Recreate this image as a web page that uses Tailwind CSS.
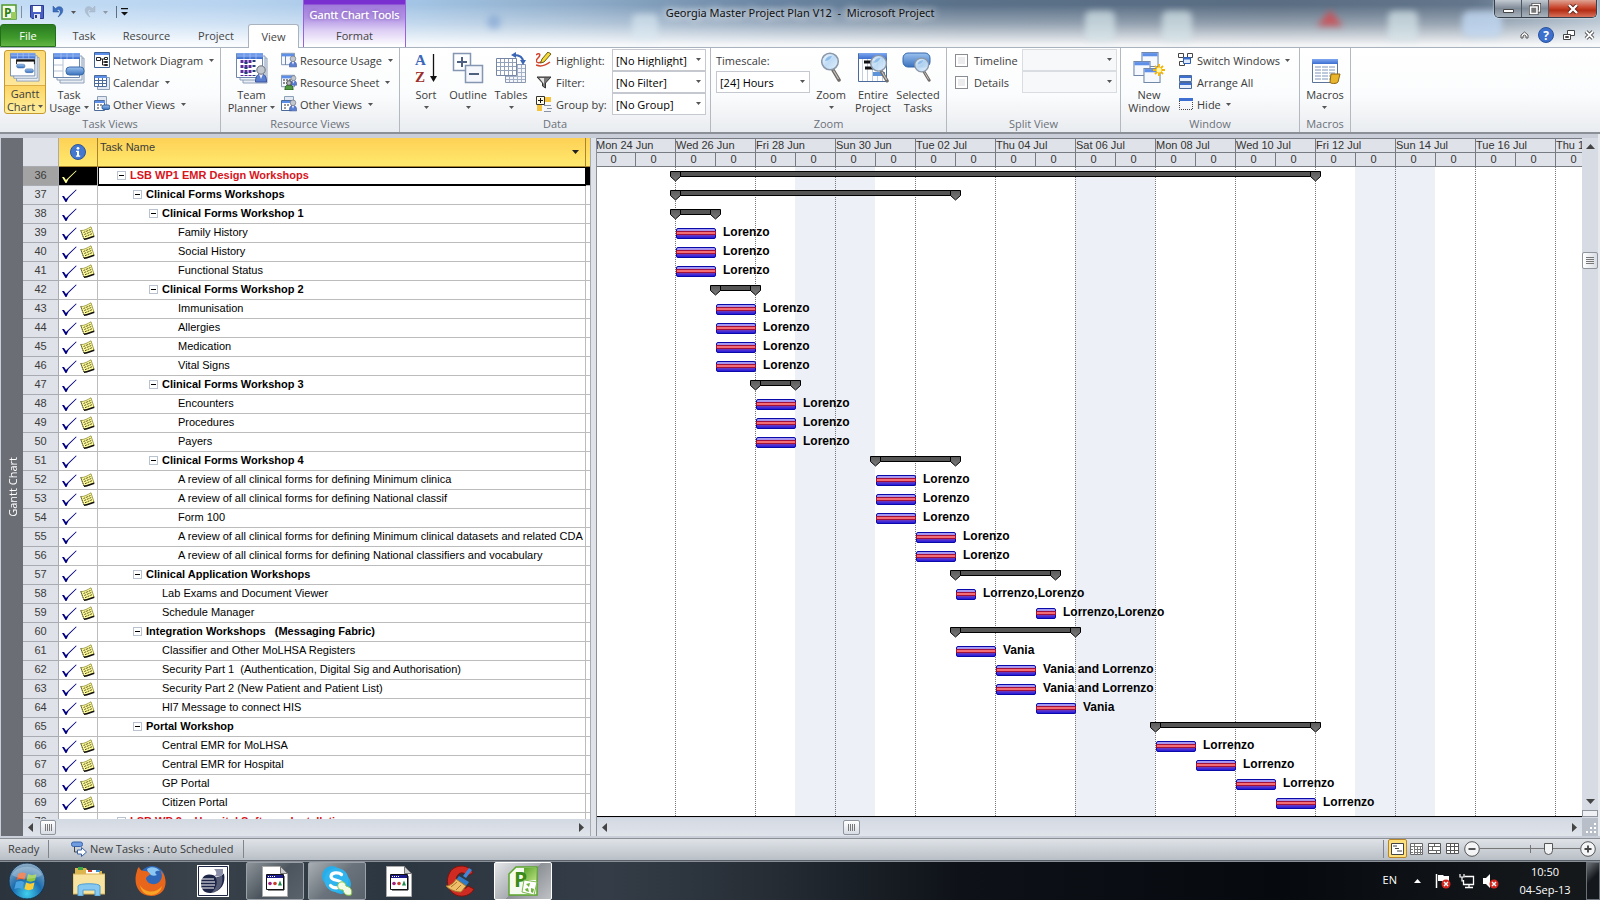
<!DOCTYPE html>
<html lang="en">
<head>
<meta charset="utf-8">
<title>Georgia Master Project Plan V12 - Microsoft Project</title>
<script src="https://cdn.jsdelivr.net/npm/@tailwindcss/browser@4"></script>
</head>
<body class="flex h-screen flex-col overflow-hidden bg-[#c9ced9] font-['Open_Sans','Noto_Sans',sans-serif] text-[11px] leading-[13px] text-[#3b3b3b]">

<!-- shared icon symbols -->
<svg class="absolute h-0 w-0" aria-hidden="true">
  <defs>
    <linearGradient id="gBlue" x1="0" y1="0" x2="0" y2="1"><stop offset="0" stop-color="#7fa8f0"/><stop offset="1" stop-color="#3d6fd0"/></linearGradient>
    <linearGradient id="gPill" x1="0" y1="0" x2="0" y2="1"><stop offset="0" stop-color="#9cc2ef"/><stop offset="1" stop-color="#3a72bd"/></linearGradient>
    <linearGradient id="gLens" x1="0" y1="0" x2="1" y2="1"><stop offset="0" stop-color="#f4faff"/><stop offset=".5" stop-color="#b9d8f4"/><stop offset="1" stop-color="#e4f1fc"/></linearGradient>
    <linearGradient id="gTask" x1="0" y1="0" x2="0" y2="1"><stop offset="0" stop-color="#a0a4ff"/><stop offset=".3" stop-color="#b08ae0"/><stop offset=".68" stop-color="#6a3ac0"/><stop offset="1" stop-color="#1414e8"/></linearGradient>
    <linearGradient id="gSum" x1="0" y1="0" x2="0" y2="1"><stop offset="0" stop-color="#5a5a5a"/><stop offset="1" stop-color="#7c7c7c"/></linearGradient>
    <radialGradient id="gOrb" cx=".5" cy=".85" r=".9"><stop offset="0" stop-color="#3fd0f0"/><stop offset=".45" stop-color="#1c6cae"/><stop offset="1" stop-color="#9fb6c8"/></radialGradient>
    <linearGradient id="gGreen" x1="0" y1="0" x2="1" y2="1"><stop offset="0" stop-color="#5ba52b"/><stop offset="1" stop-color="#b5dc7c"/></linearGradient>
  </defs>
  <symbol id="dd" viewBox="0 0 5 3"><path d="M0 0h5L2.500 3z" fill="#555"/></symbol>
  <symbol id="sheets" viewBox="0 0 32 32">
    <path d="M7 6h24v25H7z" fill="#e9eef5" stroke="#8ea0b8"/><path d="M4 4h25v24H4z" fill="#f2f5fa" stroke="#8ea0b8"/>
    <path d="M.5 1.500h26v24H.5z" fill="#fff" stroke="#6d87ad"/><path d="M1 1h26v6H1z" fill="url(#gBlue)"/>
    <path d="M1 4h26M8 1v6M14 1v6M20 1v6" stroke="#a9c4f6" stroke-width=".7"/>
  </symbol>
  <symbol id="person" viewBox="0 0 12 18"><path d="M.5 17c0-6 2-8 5.500-8s5.500 2 5.500 8z" fill="#5b7fd0" stroke="#3a559c"/><path d="M4 9l2 5 2-5z" fill="#eef"/><circle cx="6" cy="5" r="4.200" fill="#c3c8cf" stroke="#6c727b"/></symbol>
  <symbol id="lens" viewBox="0 0 20 30"><path d="M12 18l6 10" stroke="#6e6a68" stroke-width="3.500" stroke-linecap="round"/><path d="M12.500 18.500l5 8.500" stroke="#c9c4bf" stroke-width="1.200"/><circle cx="9" cy="9.500" r="8.300" fill="url(#gLens)" fill-opacity=".92" stroke="#8a97a8" stroke-width="1.500"/><path d="M4 9c1-4 4-5 7-5-1 3-4 5-7 5z" fill="#8fbdea"/></symbol>
  <symbol id="win" viewBox="0 0 16 14"><path d="M.5.5h15v13H.5z" fill="#f5f8fd" stroke="#7188aa"/><path d="M1 1h14v3H1z" fill="#5e8fe8"/></symbol>
  <symbol id="check" viewBox="0 0 15 13"><path d="M0 7h2l2 3 1-1 9-8.500.6.600L6.500 9 4.500 13H3.500z"/></symbol>
  <symbol id="note" viewBox="0 0 15 14"><path d="M.8 4.500C4 5 8 2.500 11 .8L14 10C10.500 11 7.500 13 4 13.200z" fill="#fdfb9c" stroke="#8d8a35" stroke-width=".8"/><path d="M4 13.300C8 13 11 11 14.300 10.200" stroke="#111" stroke-width="1.400" fill="none"/><path d="M.8 4.500L4 13" stroke="#333" stroke-width=".9" stroke-dasharray="1 1"/><path d="M3.500 6.500L10.500 3.500M4.300 8.500L11.300 5.500M5 10.700L12 7.700" stroke="#57551c" stroke-width="1" stroke-dasharray="2 .8"/></symbol>
  <symbol id="doc" viewBox="0 0 26 31"><path d="M.5.5h18l7 7v23H.5z" fill="#fff" stroke="#aaa"/><path d="M18.500.5v7h7z" fill="#ccc" stroke="#777"/><path d="M4.500 8.500h17v15h-17z" fill="#fff" stroke="#111"/><path d="M5 9h16v3H5z" fill="#1b1b8c"/><path d="M6 10.500h8" stroke="#fff" stroke-dasharray="1 1"/><circle cx="8" cy="17.500" r="1.800" fill="#a0237c"/><circle cx="13" cy="17.500" r="1.800" fill="#c8402c"/><path d="M18 14.500l2 5h-4z" fill="#1a8a4a"/><path d="M22 10v14H6" stroke="#111" fill="none"/></symbol>
</svg>

<header class="relative flex h-[47px] shrink-0 bg-[linear-gradient(to_bottom,rgba(255,255,255,0)_10%,rgba(255,255,255,0.35)_50%,rgba(255,255,255,0.92)_95%),linear-gradient(to_right,#c3dcf5_0%,#b7d3ef_14%,#a3c4e4_26%,#8fadca_36%,#6b86a3_48%,#5a7189_60%,#5a6d82_80%,#63768b_92%,#9db0c2_100%)]">
  <svg class="absolute top-2 left-[480px] h-9 w-[1120px] blur-[3px]" viewBox="0 0 1120 36" preserveAspectRatio="none" aria-hidden="true"><circle cx="14" cy="14" r="7" fill="#7ba0d0" opacity=".6"/><rect x="152" y="6" width="26" height="26" rx="5" fill="#dcebf3" opacity=".6"/><rect x="605" y="3" width="30" height="30" rx="6" fill="#d5e6ea" opacity=".7"/><rect x="682" y="3" width="30" height="30" rx="6" fill="#d5e6ea" opacity=".7"/><rect x="908" y="3" width="30" height="30" rx="6" fill="#d5e6ea" opacity=".7"/><path d="M850 2l13 16h-26z" fill="#d2484d" opacity=".8"/><rect x="982" y="3" width="40" height="26" rx="8" fill="#c0d8f2" opacity=".8"/></svg>
  <div class="absolute inset-x-0 top-0 flex h-6 items-center justify-center text-[#111] [text-shadow:0_0_8px_#fff,0_0_8px_#fff]"><h1 class="font-['Noto_Sans',sans-serif] text-[11px] whitespace-pre">Georgia Master Project Plan V12  -  Microsoft Project</h1></div>

  <div class="relative flex w-[303px] shrink-0 flex-col">
    <div class="flex h-6 items-center pl-px">
      <svg class="h-4 w-4" viewBox="0 0 16 16"><path d="M1 1h14v14H1z" fill="#f4faea" stroke="#4f9a28" stroke-width="1.500"/><path d="M10 8h5v7h-5z" fill="#9ccc5e"/><text x="3" y="13" font-family="Open Sans" font-weight="700" font-size="12" fill="#2f7d14">P</text></svg>
      <span class="mx-1 h-3 w-px bg-[#7f8fa3]"></span>
      <button class="ml-1" aria-label="Save"><svg class="h-[14px] w-[14px]" viewBox="0 0 14 14"><path d="M.5.5h13v13H2l-1.500-1.500z" fill="#4a5fc4" stroke="#2c3a8c"/><path d="M3 1h8v6H3z" fill="#fff"/><path d="M4 9h6v5H4z" fill="#dde3f3"/><path d="M5 10h2v3H5z" fill="#2c3a8c"/></svg></button>
      <button class="ml-2 flex items-center gap-[7px]" aria-label="Undo"><svg class="h-3 w-3" viewBox="0 0 12 12"><path d="M1 0v6h6L4.700 4C8 2 10 6 6 11c7-4 6-12-.5-10L3.500 2.500z" fill="#3c6fc0" stroke="#2a5299" stroke-width=".5"/></svg><svg class="h-[3px] w-[5px]"><use href="#dd"/></svg></button>
      <button class="ml-2 flex items-center gap-[7px] opacity-50" aria-label="Redo"><svg class="h-3 w-3 -scale-x-100" viewBox="0 0 12 12"><path d="M1 0v6h6L4.700 4C8 2 10 6 6 11c7-4 6-12-.5-10L3.500 2.500z" fill="#9aa4b2" stroke="#808b9b" stroke-width=".5"/></svg><svg class="h-[3px] w-[5px]"><use href="#dd"/></svg></button>
      <span class="mx-1 ml-2 h-3 w-px bg-[#5f6f83]"></span>
      <button aria-label="Customize toolbar"><svg class="h-2 w-[7px]" viewBox="0 0 7 8"><path d="M0 0h7v1.300H0zM0 4h7L3.500 7.500z" fill="#111"/></svg></button>
    </div>
    <nav class="flex h-[23px] text-[#444]">
      <button class="mr-[3px] w-14 rounded-t-[3px] border border-[#24701a] bg-[linear-gradient(#2a7a22,#3f9a2b_60%,#63b544)] text-white">File</button>
      <button class="w-[50px]">Task</button>
      <button class="w-[75px]">Resource</button>
      <button class="w-[64px]">Project</button>
      <button class="-mb-px w-[51px] rounded-t-[3px] border border-b-0 border-[#a9b3c0] bg-white">View</button>
    </nav>
  </div>
  <div class="relative flex w-[103px] shrink-0 flex-col border-x border-[#9a62d8] bg-[linear-gradient(#7a2fd0_0,#7a2fd0_4px,#a07ada_5px,#b294e4_18px,#dccdf4_30px,#ffffff_46px)]">
    <div class="flex h-6 items-center justify-center pt-1 whitespace-nowrap text-white text-[11px] [text-shadow:0_0_1px_#fff,0_0_3px_#5a2f9a]">Gantt Chart Tools</div>
    <button class="h-[23px] text-[#444]">Format</button>
  </div>
  <div class="relative ml-auto flex flex-col items-end pr-[3px]">
    <div class="flex h-[18px] overflow-hidden rounded-b-[5px] border border-t-0 border-[#35404c] shadow-[0_0_2px_#fff]">
      <button class="flex w-[27px] items-center justify-center border-r border-[#4d5763] bg-[linear-gradient(#c2c9d1,#7f8a97_50%,#a9b3bd)]" aria-label="Minimize"><svg class="mt-1 h-1 w-[11px]" viewBox="0 0 11 4"><path d="M.5.5h10v3H.5z" fill="#fff" stroke="#444"/></svg></button>
      <button class="flex w-[27px] items-center justify-center border-r border-[#4d5763] bg-[linear-gradient(#c2c9d1,#7f8a97_50%,#a9b3bd)]" aria-label="Restore"><svg class="h-3 w-3" viewBox="0 0 12 12"><path d="M4 1.500h6.500V8H4z" fill="none" stroke="#444" stroke-width="3"/><path d="M4 1.500h6.500V8H4z" fill="none" stroke="#fff" stroke-width="1.500"/><path d="M1.500 4H8v6.500H1.500z" fill="#777" stroke="#444" stroke-width="3"/><path d="M1.500 4H8v6.500H1.500z" fill="#777" stroke="#fff" stroke-width="1.600"/></svg></button>
      <button class="flex w-[47px] items-center justify-center bg-[linear-gradient(#e0a394,#c8452c_45%,#b32d14_60%,#d8705a)]" aria-label="Close"><svg class="h-[10px] w-3" viewBox="0 0 12 10"><path d="M2 1l8 8M10 1L2 9" stroke="#5b2218" stroke-width="4"/><path d="M2 1l8 8M10 1L2 9" stroke="#fff" stroke-width="2.400"/></svg></button>
    </div>
    <div class="mt-2 flex h-[18px] items-center gap-[9px] pr-[2px]">
      <button aria-label="Collapse ribbon"><svg class="h-2 w-[9px]" viewBox="0 0 9 8"><path d="M1 7V4l3.500-3L8 4v3H6V5L4.500 4 3 5v2z" fill="#fff" stroke="#555"/></svg></button>
      <button aria-label="Help"><svg class="h-4 w-4" viewBox="0 0 16 16"><circle cx="8" cy="8" r="7.500" fill="#3c70cc" stroke="#2a539e"/><text x="8" y="12.500" text-anchor="middle" font-family="Open Sans" font-weight="700" font-size="12" fill="#fff">?</text></svg></button>
      <button aria-label="Restore document"><svg class="h-3 w-3" viewBox="0 0 12 12"><path d="M4.500 1.500h7v5h-7z" fill="#fff" stroke="#444"/><path d="M.5 5.500h7v5h-7z" fill="#fff" stroke="#444"/><path d="M2.500 7.500h3v1h-3z" fill="none" stroke="#444"/></svg></button>
      <button aria-label="Close document"><svg class="h-[10px] w-[11px]" viewBox="0 0 11 10"><path d="M2 1.500l7 7M9 1.500l-7 7" stroke="#444" stroke-width="3.800"/><path d="M2 1.500l7 7M9 1.500l-7 7" stroke="#fff" stroke-width="1.800"/></svg></button>
    </div>
  </div>
</header>

<!-- ribbon -->
<section class="flex h-[87px] shrink-0 border-t border-b-2 border-t-[#a9b3c0] border-b-[#8b9097] bg-[linear-gradient(#ffffff_0%,#fbfcfd_55%,#e9ecf0_100%)]">
  <div class="flex w-[221px] shrink-0 flex-col border-r border-[#b4b9c0]">
    <div class="flex h-[68px] pt-px pl-1">
      <button class="mt-px flex h-16 w-[42px] flex-col items-center rounded-[3px] border border-[#c79a30] bg-[linear-gradient(#fbd977,#fde79a_55%,#fbd566_56%,#fff0a0)] pt-px"><svg class="h-8 w-8" viewBox="0 0 32 32"><use href="#sheets" width="32" height="32"/><path d="M7 9h19" stroke="#111" stroke-width="2.500"/><path d="M7 8v5M26 8v5" stroke="#111"/><rect x="7" y="13" width="9" height="4" rx="2" fill="url(#gPill)" stroke="#3a6ba8" stroke-width=".6"/><rect x="16" y="18" width="9" height="4" rx="2" fill="url(#gPill)" stroke="#3a6ba8" stroke-width=".6"/></svg><span class="mt-[3px] w-full border-t border-[#dcae45] pt-px">Gantt</span><span class="flex items-center gap-[3px]">Chart<svg class="h-[3px] w-[5px]"><use href="#dd"/></svg></span></button>
      <button class="ml-[2px] flex w-[42px] flex-col items-center pt-[3px]"><svg class="h-8 w-8" viewBox="0 0 32 32"><use href="#sheets" width="32" height="32"/><path d="M10 7v18M1 13h9M1 19h9" stroke="#b6c3d6"/><rect x="13" y="15" width="18" height="8" rx="3.500" fill="url(#gPill)" stroke="#3a6ba8"/></svg><span class="mt-[4px]">Task</span><span class="flex items-center gap-[3px] whitespace-nowrap">Usage<svg class="h-[3px] w-[5px]"><use href="#dd"/></svg></span></button>
      <div class="ml-1 flex flex-col whitespace-nowrap">
        <button class="flex h-[22px] items-center"><svg class="mr-[3px] h-4 w-4" viewBox="0 0 16 16"><path d="M.5.5h15v15H.5z" fill="#fff" stroke="#3a6199"/><path d="M1 1h14v2H1z" fill="#5e8fe8"/><path d="M2.500 5.500h4v3h-4zM10.500 5.500h3v2h-3zM10.500 9.500h3v1h-3zM10.500 12.500h3v1h-3z" fill="#fff" stroke="#222"/><path d="M6.500 7h2v6h2M8.500 10h2M8.500 7h2" stroke="#222" fill="none"/></svg>Network Diagram<svg class="ml-[6px] h-[3px] w-[5px]"><use href="#dd"/></svg></button>
        <button class="flex h-[22px] items-center"><svg class="mr-[3px] h-4 w-4" viewBox="0 0 16 16"><path d="M3.500 3.500h12v12h-12z" fill="#e3e9f2" stroke="#8ea0b8"/><path d="M.5 1.500h12v11H.5z" fill="#fff" stroke="#4a6a99"/><path d="M1 2h12v2H1z" fill="#5e8fe8"/><path d="M4.500 4v8M8.500 4v8M1 6.500h12M1 9.500h12" stroke="#4a6a99"/></svg>Calendar<svg class="ml-[6px] h-[3px] w-[5px]"><use href="#dd"/></svg></button>
        <button class="flex h-[22px] items-center"><svg class="mr-[3px] h-4 w-4" viewBox="0 0 16 16"><path d="M3.500.5h9v9h-9z" fill="#e3e9f2" stroke="#8ea0b8"/><path d="M.5 4.500h10v10H.5z" fill="#fff" stroke="#4a6a99"/><path d="M1 5h10v2H1z" fill="#5e8fe8"/><path d="M3 9h2M6 9h2M3 12h2" stroke="#333"/><rect x="8" y="9" width="8" height="4.500" rx="2" fill="url(#gPill)" stroke="#2f5f9f"/></svg>Other Views<svg class="ml-[6px] h-[3px] w-[5px]"><use href="#dd"/></svg></button>
      </div>
    </div>
    <div class="text-center leading-[16px] text-[#6b7079]">Task Views</div>
  </div>
  <div class="flex w-[179px] shrink-0 flex-col border-r border-[#b4b9c0]">
    <div class="flex h-[68px] pt-px pl-[6px]">
      <button class="flex w-[49px] flex-col items-center pt-[3px]"><svg class="h-8 w-8" viewBox="0 0 32 32"><use href="#sheets" width="32" height="32"/><path d="M6 8v16M10 8v16M14 8v16" stroke="#5a2a9a" stroke-width="3" stroke-dasharray="3 2"/><path d="M10 10v12M18 8v16" stroke="#23407a" stroke-width="3" stroke-dasharray="2 3"/><use href="#person" x="19" y="13" width="12" height="18"/></svg><span class="mt-[4px]">Team</span><span class="flex items-center gap-[3px] whitespace-nowrap">Planner<svg class="h-[3px] w-[5px]"><use href="#dd"/></svg></span></button>
      <div class="ml-[5px] flex flex-col whitespace-nowrap">
        <button class="flex h-[22px] items-center"><svg class="mr-[3px] h-4 w-4" viewBox="0 0 16 16"><use href="#win" width="14" height="14"/><path d="M4.500 4v9" stroke="#7188aa"/><use href="#person" x="8" y="3" width="8" height="13"/></svg>Resource Usage<svg class="ml-[6px] h-[3px] w-[5px]"><use href="#dd"/></svg></button>
        <button class="flex h-[22px] items-center"><svg class="mr-[3px] h-4 w-4" viewBox="0 0 16 16"><use href="#win" width="14" height="14"/><path d="M2 6h10M2 9h7" stroke="#222" stroke-dasharray="2 1"/><use href="#person" x="9" y="1" width="7" height="11"/><path d="M4 16c0-4 1-5 4-5s4 1 4 5z" fill="#4f9a3e" stroke="#245a1a"/><circle cx="8" cy="9" r="2.300" fill="#b7bcc3" stroke="#555"/></svg>Resource Sheet<svg class="ml-[6px] h-[3px] w-[5px]"><use href="#dd"/></svg></button>
        <button class="flex h-[22px] items-center"><svg class="mr-[3px] h-4 w-4" viewBox="0 0 16 16"><path d="M3.500.5h9v9h-9z" fill="#e3e9f2" stroke="#8ea0b8"/><path d="M.5 4.500h10v10H.5z" fill="#fff" stroke="#4a6a99"/><path d="M1 5h10v2H1z" fill="#5e8fe8"/><path d="M3 9h2M6 9h2M3 12h2" stroke="#333"/><use href="#person" x="8" y="3" width="8" height="13"/></svg>Other Views<svg class="ml-[6px] h-[3px] w-[5px]"><use href="#dd"/></svg></button>
      </div>
    </div>
    <div class="text-center leading-[16px] text-[#6b7079]">Resource Views</div>
  </div>
  <div class="flex w-[311px] shrink-0 flex-col border-r border-[#b4b9c0]">
    <div class="flex h-[68px] pt-px pl-[6px]">
      <button class="flex w-10 flex-col items-center pt-[3px]"><svg class="h-8 w-6" viewBox="0 0 24 32"><text x="1" y="13" font-family="Liberation Serif" font-weight="700" font-size="15" fill="#3a67b8">A</text><text x="1" y="30" font-family="Liberation Serif" font-weight="700" font-size="15" fill="#9c2f2b">Z</text><path d="M19.500 2v24" stroke="#111" stroke-width="1.300"/><path d="M16 24h7l-3.500 6z" fill="#111"/></svg><span class="mt-[4px]">Sort</span><svg class="mt-[5px] h-[3px] w-[5px]"><use href="#dd"/></svg></button>
      <button class="flex w-[44px] flex-col items-center pt-[3px]"><svg class="h-8 w-8" viewBox="0 0 32 32"><path d="M1.500 1.500h17v17h-17z" fill="#fdfeff" stroke="#8596b3" stroke-width="1.500"/><path d="M5 10h10M10 5v10" stroke="#4d6080" stroke-width="2"/><path d="M13.500 13.500h17v17h-17z" fill="#f4f7fb" stroke="#8596b3" stroke-width="1.500"/><path d="M17 22h10" stroke="#4d6080" stroke-width="2"/></svg><span class="mt-[4px]">Outline</span><svg class="mt-[5px] h-[3px] w-[5px]"><use href="#dd"/></svg></button>
      <button class="flex w-[42px] flex-col items-center pt-[3px]"><svg class="h-8 w-8" viewBox="0 0 32 32"><path d="M10.500 12.500h20v18h-20z" fill="#f4f6fa" stroke="#8a97b0"/><path d="M14.500 13v17M18.500 13v17M22.500 13v17M26.500 13v17M11 16.500h19M11 20.500h19M11 24.500h19M11 27.500h19" stroke="#a5b1c6"/><path d="M1.500 6.500h20v17h-20z" fill="#fff" stroke="#7685a3"/><path d="M5.500 7v16M9.500 7v16M13.500 7v16M17.500 7v16M2 10.500h19M2 14.500h19M2 18.500h19" stroke="#93a1bb"/><path d="M19 3c6 0 9 2 9 7" fill="none" stroke="#3a66b5" stroke-width="2"/><path d="M21 0v6l-5-3zM25 8h6l-3 5z" fill="#3a66b5"/></svg><span class="mt-[4px]">Tables</span><svg class="mt-[5px] h-[3px] w-[5px]"><use href="#dd"/></svg></button>
      <div class="ml-1 grid grid-cols-[76px_94px] content-start whitespace-nowrap">
        <label for="hl" class="flex h-[22px] items-center"><svg class="mr-1 h-4 w-4" viewBox="0 0 16 16"><path d="M0 3c4-3 5 0 2 3s-2 6 4 4M0 13c5 2 9 1 14-3" stroke="#d2452c" fill="none" stroke-width="1.500"/><path d="M12 0l3 2-7 8-3.500 1L6 7z" fill="#f3d93a" stroke="#6b5a10"/></svg>Highlight:</label>
        <span class="relative"><select id="hl" class="h-[22px] w-full appearance-none border border-[#c5c9cf] bg-white pl-[3px] text-black"><option>[No Highlight]</option></select><svg class="pointer-events-none absolute top-[9px] right-[5px] h-[3px] w-[5px]"><use href="#dd"/></svg></span>
        <label for="fl" class="flex h-[22px] items-center"><svg class="mr-1 h-4 w-4" viewBox="0 0 16 16"><path d="M1 3h14L9.500 9v5L6.500 12V9z" fill="#777" stroke="#333"/><path d="M3.500 4H8v6z" fill="#e6e6e6"/></svg>Filter:</label>
        <span class="relative"><select id="fl" class="h-[22px] w-full appearance-none border border-[#c5c9cf] bg-white pl-[3px] text-black"><option>[No Filter]</option></select><svg class="pointer-events-none absolute top-[9px] right-[5px] h-[3px] w-[5px]"><use href="#dd"/></svg></span>
        <label for="gb" class="flex h-[22px] items-center"><svg class="mr-1 h-4 w-4" viewBox="0 0 16 16"><path d="M8 1h7v5H8zM1 9h5v6H1z" fill="#f6c33c"/><path d="M.5.5h8v8h-8z" fill="#fffbe6" stroke="#333"/><path d="M2 4.500h5M4.500 2v5" stroke="#111"/><path d="M8 9.500h7M11 12.500h5M8 15.500h7" stroke="#8a93a3"/></svg>Group by:</label>
        <span class="relative"><select id="gb" class="h-[22px] w-full appearance-none border border-[#c5c9cf] bg-white pl-[3px] text-black"><option>[No Group]</option></select><svg class="pointer-events-none absolute top-[9px] right-[5px] h-[3px] w-[5px]"><use href="#dd"/></svg></span>
      </div>
    </div>
    <div class="text-center leading-[16px] text-[#6b7079]">Data</div>
  </div>
  <div class="flex w-[236px] shrink-0 flex-col border-r border-[#b4b9c0]">
    <div class="flex h-[68px] pt-px pl-[5px]">
      <div class="w-[94px]">
        <label for="ts" class="flex h-[22px] items-center">Timescale:</label>
        <span class="relative block"><select id="ts" class="h-[22px] w-full appearance-none border border-[#c5c9cf] bg-white pl-[3px] text-black"><option>[24] Hours</option></select><svg class="pointer-events-none absolute top-[9px] right-[5px] h-[3px] w-[5px]"><use href="#dd"/></svg></span>
      </div>
      <button class="ml-[2px] flex w-[38px] flex-col items-center pt-[3px]"><svg class="h-8 w-8" viewBox="0 0 32 32"><use href="#lens" x="6" y="0" width="20" height="30"/></svg><span class="mt-[4px]">Zoom</span><svg class="mt-[5px] h-[3px] w-[5px]"><use href="#dd"/></svg></button>
      <button class="ml-[2px] flex w-[42px] flex-col items-center pt-[3px]"><svg class="h-8 w-8" viewBox="0 0 32 32"><path d="M1.500 1.500h28v28h-28z" fill="#fff" stroke="#4a6a99"/><path d="M2 1h28v6H2z" fill="url(#gBlue)"/><path d="M5.500 7v22M10.500 7v22M15.500 7v22M20.500 7v22M25.500 7v22" stroke="#c3cede"/><path d="M7 10h10M8 16h8" stroke="#111" stroke-width="3"/><path d="M16 20h12v4H16z" fill="#5d93d8"/><use href="#lens" x="13" y="2" width="19" height="29"/></svg><span class="mt-[4px]">Entire</span><span>Project</span></button>
      <button class="flex w-[48px] flex-col items-center pt-[3px]"><svg class="h-8 w-8" viewBox="0 0 32 32"><rect x="1" y="1" width="27" height="14" rx="5" fill="url(#gPill)" stroke="#3467ad"/><use href="#lens" x="11" y="5" width="19" height="25"/></svg><span class="mt-[4px]">Selected</span><span>Tasks</span></button>
    </div>
    <div class="text-center leading-[16px] text-[#6b7079]">Zoom</div>
  </div>
  <div class="flex w-[174px] shrink-0 flex-col border-r border-[#b4b9c0]">
    <div class="grid h-[68px] grid-cols-[67px_95px] content-start pt-px pl-2">
      <label class="flex h-[22px] items-center gap-[6px]"><input type="checkbox" class="h-[13px] w-[13px] appearance-none border border-[#8a8d92] bg-[#ececee] shadow-[inset_0_0_0_2px_#fff]">Timeline</label>
      <span class="relative"><select aria-label="Timeline view" disabled class="h-[22px] w-full appearance-none border border-[#d9dce1] bg-[#f7f8f9]"></select><svg class="pointer-events-none absolute top-[9px] right-[5px] h-[3px] w-[5px]"><use href="#dd"/></svg></span>
      <label class="flex h-[22px] items-center gap-[6px]"><input type="checkbox" class="h-[13px] w-[13px] appearance-none border border-[#8a8d92] bg-[#ececee] shadow-[inset_0_0_0_2px_#fff]">Details</label>
      <span class="relative"><select aria-label="Details view" disabled class="h-[22px] w-full appearance-none border border-[#d9dce1] bg-[#f7f8f9]"></select><svg class="pointer-events-none absolute top-[9px] right-[5px] h-[3px] w-[5px]"><use href="#dd"/></svg></span>
    </div>
    <div class="text-center leading-[16px] text-[#6b7079]">Split View</div>
  </div>
  <div class="flex w-[179px] shrink-0 flex-col border-r border-[#b4b9c0]">
    <div class="flex h-[68px] pt-px pl-[5px]">
      <button class="flex w-[46px] flex-col items-center pt-[3px]"><svg class="h-8 w-8" viewBox="0 0 32 32"><use href="#win" x="8" y="0" width="18" height="15"/><use href="#win" x="0" y="9" width="18" height="15"/><use href="#win" x="10" y="16" width="18" height="15"/><path d="M26 12v12M20 18h12M22 14l8 8M30 14l-8 8" stroke="#f4b400" stroke-width="1.800"/><circle cx="26" cy="18" r="2.500" fill="#fff9b0"/></svg><span class="mt-[4px]">New</span><span>Window</span></button>
      <div class="ml-[6px] flex flex-col whitespace-nowrap">
        <button class="flex h-[22px] items-center"><svg class="mr-[3px] h-4 w-4" viewBox="0 0 16 16"><path d="M.5 1.500h5v4h-5zM9.500 1.500h5v4h-5zM1.500 9.500h5v4h-5z" fill="#fff" stroke="#444"/><path d="M5.500 5.500h7v6h-7z" fill="#dce8fb" stroke="#2f5fb0"/><path d="M6 6h6v1.500H6z" fill="#3d6fd0"/></svg>Switch Windows<svg class="ml-[5px] h-[3px] w-[5px]"><use href="#dd"/></svg></button>
        <button class="flex h-[22px] items-center"><svg class="mr-[3px] h-4 w-4" viewBox="0 0 16 16"><path d="M1.500 1.500h12v6h-12zM1.500 8.500h12v6h-12z" fill="#e8f0fb" stroke="#4a6a99"/><path d="M2 2h11v2H2zM2 9h11v2H2z" fill="#3d6fd0"/></svg>Arrange All</button>
        <button class="flex h-[22px] items-center"><svg class="mr-[3px] h-4 w-4" viewBox="0 0 16 16"><path d="M1 2h14v3H1z" fill="#3d6fd0"/><path d="M1.500 5v8.500h13V5" fill="none" stroke="#444" stroke-dasharray="1 1"/></svg>Hide<svg class="ml-[5px] h-[3px] w-[5px]"><use href="#dd"/></svg></button>
      </div>
    </div>
    <div class="text-center leading-[16px] text-[#6b7079]">Window</div>
  </div>
  <div class="flex w-[51px] shrink-0 flex-col border-r border-[#b4b9c0]">
    <div class="flex h-[68px] justify-center pt-px">
      <button class="flex flex-col items-center pt-[3px]"><svg class="h-8 w-8" viewBox="0 0 32 32"><path d="M3.500 7.500h25v23h-25z" fill="#fff" stroke="#5c7399"/><path d="M3 7h26v5H3z" fill="url(#gBlue)"/><path d="M6 15h20M6 18h20M6 21h20M6 24h20M6 27h20" stroke="#7f94b8" stroke-dasharray="6 1"/><path d="M22 22h9l-2 8c-1 2-8 2-8 0z" fill="#e9b52c" stroke="#8e6610"/></svg><span class="mt-[4px]">Macros</span><svg class="mt-[5px] h-[3px] w-[5px]"><use href="#dd"/></svg></button>
    </div>
    <div class="text-center leading-[16px] text-[#6b7079]">Macros</div>
  </div>
</section>

<!-- workspace -->
<main class="flex min-h-0 flex-1 border-r-2 border-[#e6e9ee] pt-1 font-['Liberation_Sans',Arial,sans-serif]">
  <div class="ml-px flex w-[22px] shrink-0 items-center justify-center bg-[#6b6e75] font-['Open_Sans',sans-serif] text-[11px] text-white"><span class="rotate-180 [writing-mode:vertical-rl]">Gantt Chart</span></div>

  <div class="flex w-[568px] shrink-0 flex-col border-r border-[#a8abb2]">
    <div class="min-h-0 flex-1 overflow-hidden bg-white">
      <table class="w-full table-fixed border-separate border-spacing-0 text-black">
        <colgroup><col class="w-9"><col class="w-[39px]"><col><col class="w-1"></colgroup>
        <thead>
          <tr class="h-[29px]">
            <th class="border-r border-b border-[#a8abb2] bg-[#dfe2e8] p-0" aria-label="Row"></th>
            <th class="border-r border-b border-[#a9842c] bg-[linear-gradient(#fdd155,#ffe96e)] p-0"><svg class="mx-auto h-4 w-4" viewBox="0 0 16 16" role="img" aria-label="Indicators"><circle cx="8" cy="8" r="7.500" fill="#4478cf" stroke="#2c559f"/><circle cx="8" cy="4.300" r="1.400" fill="#fff"/><path d="M6 6.800h3v4.700h1.200v1.200H5.900v-1.200H7V8H6z" fill="#fff"/></svg></th>
            <th class="border-r border-b border-[#a9842c] bg-[linear-gradient(#fdd155,#ffe96e)] p-0 pl-[2px] text-left font-normal text-[#3b3b3b]"><span class="flex items-center justify-between"><span class="pb-[9px]">Task Name</span><svg class="mr-[6px] h-1 w-[7px]" viewBox="0 0 7 4"><path d="M0 0h7L3.500 4z" fill="#222"/></svg></span></th>
            <th class="border-b border-[#a9842c] bg-[linear-gradient(#fdd155,#ffe96e)] p-0" aria-label="More columns"></th>
          </tr>
        </thead>
        <tbody id="tasks"></tbody>
      </table>
    </div>
    <div class="flex h-[17px] shrink-0 items-center bg-[linear-gradient(#d3d9e2,#e0e4eb)]">
      <svg class="mr-[7px] ml-[5px] h-[9px] w-[5px]" viewBox="0 0 5 9"><path d="M5 0v9L0 4.500z" fill="#444"/></svg>
      <div class="flex h-[15px] w-4 items-center justify-center gap-px rounded-[2px] border border-[#8f949d] bg-[linear-gradient(#fff,#d8dce4)]"><i class="h-[7px] w-px bg-[#777]"></i><i class="h-[7px] w-px bg-[#777]"></i><i class="h-[7px] w-px bg-[#777]"></i><i class="h-[7px] w-px bg-[#777]"></i></div>
      <svg class="mr-[6px] ml-auto h-[9px] w-[5px]" viewBox="0 0 5 9"><path d="M0 0v9l5-4.500z" fill="#444"/></svg>
    </div>
  </div>
  <div class="w-[5px] shrink-0 bg-[#dfe2e8]"></div>

  <div class="flex min-w-0 flex-1 flex-col border-l border-[#8b8f96]">
    <div class="h-[29px] shrink-0 overflow-hidden border-t border-b border-[#777b82] bg-[#dfe2e8] leading-[13px] text-[#333]">
      <div id="major" class="-ml-[2px] flex h-[14px] w-max border-b border-[#777b82]"></div>
      <div id="minor" class="-ml-[2px] flex h-[13px] w-max"></div>
    </div>
    <div class="relative min-h-0 flex-1 overflow-hidden border-b border-black bg-white">
      <div id="grid" class="absolute inset-y-0 -left-[2px] flex w-max"></div>
      <div id="bars" class="relative text-[12px] font-bold text-black"></div>
    </div>
    <div class="mt-px flex h-[18px] shrink-0 items-center bg-[linear-gradient(#d3d9e2,#e0e4eb)]">
      <svg class="ml-[5px] h-[9px] w-[5px]" viewBox="0 0 5 9"><path d="M5 0v9L0 4.500z" fill="#444"/></svg>
      <div class="ml-[24%] flex h-[15px] w-[17px] items-center justify-center gap-px rounded-[2px] border border-[#8f949d] bg-[linear-gradient(#fff,#d8dce4)]"><i class="h-[7px] w-px bg-[#777]"></i><i class="h-[7px] w-px bg-[#777]"></i><i class="h-[7px] w-px bg-[#777]"></i><i class="h-[7px] w-px bg-[#777]"></i></div>
      <svg class="mr-[5px] ml-auto h-[9px] w-[5px]" viewBox="0 0 5 9"><path d="M0 0v9l5-4.500z" fill="#444"/></svg>
    </div>
  </div>
  <div class="flex w-4 shrink-0 flex-col items-center bg-[#d6dbe4]">
    <svg class="mt-[6px] h-[5px] w-[9px]" viewBox="0 0 9 5"><path d="M0 5h9L4.500 0z" fill="#444"/></svg>
    <div class="flex min-h-0 w-full flex-1 flex-col pt-[15%]"><div class="h-[101px]"></div>
      <div class="flex h-[17px] w-4 flex-col items-center justify-center gap-px rounded-[2px] border border-[#8f949d] bg-[linear-gradient(90deg,#fff,#d8dce4)]"><i class="h-px w-2 bg-[#777]"></i><i class="h-px w-2 bg-[#777]"></i><i class="h-px w-2 bg-[#777]"></i><i class="h-px w-2 bg-[#777]"></i></div>
    </div>
    <svg class="mb-[6px] h-[5px] w-[9px]" viewBox="0 0 9 5"><path d="M0 0h9L4.500 5z" fill="#444"/></svg>
    <div class="h-[7px] w-full border border-[#8f949d] bg-[#eef0f4]"></div>
    <svg class="mt-px h-[18px] w-4 bg-[#b9bfc9]" viewBox="0 0 16 18"><path d="M12 5h2v2h-2zM8 9h2v2H8zM12 9h2v2h-2zM4 13h2v2H4zM8 13h2v2H8zM12 13h2v2h-2z" fill="#fff"/></svg>
  </div>
</main>

<!-- status bar -->
<footer class="mt-[2px] flex h-[23px] shrink-0 items-center border-y border-t-[#8b8f96] border-b-[#5b6068] bg-[linear-gradient(#dfe3e8,#b9bfc6)] pb-[2px]">
  <span class="w-12 pl-2">Ready</span><span class="h-[18px] w-px bg-[#80858d]"></span>
  <button class="ml-[22px] flex w-[172px] items-center gap-[3px] whitespace-nowrap"><svg class="h-4 w-4 shrink-0" viewBox="0 0 16 16"><rect x=".5" y="1" width="11" height="4.500" rx="2" fill="#6f9be0" stroke="#3a62a8"/><path d="M3.500 6v5h3" fill="none" stroke="#444"/><path d="M6.500 9h4V6.500l5 4.500-5 4.500V13h-4z" fill="#fff" stroke="#3a62a8"/></svg>New Tasks : Auto Scheduled</button>
  <span class="h-[18px] w-px bg-[#80858d]"></span>
  <span class="mr-1 ml-auto h-[18px] w-px bg-[#80858d]"></span>
  <button aria-label="Gantt Chart view" class="flex h-[19px] w-[19px] items-center justify-center rounded-[2px] border border-[#b8862a] bg-[#ffe07a]"><svg class="h-3 w-[13px]" viewBox="0 0 13 12"><path d="M.5.5h12v11H.5z" fill="#fff" stroke="#444"/><path d="M2 3h4M4 5.500h4M6 8h5" stroke="#444"/></svg></button>
  <button aria-label="Task Usage view" class="ml-[3px]"><svg class="h-3 w-[13px]" viewBox="0 0 13 12"><path d="M.5.5h12v11H.5z" fill="#fff" stroke="#666"/><path d="M4.500 1v11M7.500 4v8M10.500 4v8M1 3.500h12M4 6.500h9M4 9.500h9M1 6.500h2M1 9.500h2" stroke="#777"/></svg></button>
  <button aria-label="Team Planner view" class="ml-[5px]"><svg class="h-[11px] w-[13px]" viewBox="0 0 13 11"><path d="M.5.5h12v10H.5z" fill="#fff" stroke="#555"/><path d="M1 3.500h12M1 7.500h12M6.500 1v2M4.500 4v4M8.500 8v3" stroke="#666"/></svg></button>
  <button aria-label="Resource Sheet view" class="ml-[5px]"><svg class="h-[11px] w-[13px]" viewBox="0 0 13 11"><path d="M.5.5h12v10H.5z" fill="#fff" stroke="#555"/><path d="M1 3.500h12M1 7.500h12M4.500 1v10M8.500 1v10" stroke="#555"/></svg></button>
  <button aria-label="Zoom out" class="ml-[5px]"><svg class="h-4 w-4" viewBox="0 0 16 16"><circle cx="8" cy="8" r="7.300" fill="#f4f5f7" stroke="#555"/><path d="M4.500 8h7" stroke="#444" stroke-width="1.800"/></svg></button>
  <input type="range" aria-label="Zoom" value="70" class="h-4 w-[100px] appearance-none bg-[linear-gradient(#777,#777),linear-gradient(#777,#777)] bg-[size:100%_1px,1px_8px] bg-center bg-no-repeat [&::-webkit-slider-thumb]:h-3 [&::-webkit-slider-thumb]:w-[9px] [&::-webkit-slider-thumb]:appearance-none [&::-webkit-slider-thumb]:rounded-b-[5px] [&::-webkit-slider-thumb]:border [&::-webkit-slider-thumb]:border-[#555] [&::-webkit-slider-thumb]:bg-[#f2f3f5]">
  <button aria-label="Zoom in" class="mr-1"><svg class="h-4 w-4" viewBox="0 0 16 16"><circle cx="8" cy="8" r="7.300" fill="#f4f5f7" stroke="#555"/><path d="M4.500 8h7M8 4.500v7" stroke="#444" stroke-width="1.800"/></svg></button>
</footer>

<!-- taskbar -->
<nav class="flex h-[39px] shrink-0 items-center border-t border-[#8a9097] bg-[linear-gradient(to_right,#2b343d_0%,#39424b_12%,#2c3640_25%,#343d47_38%,#262d35_48%,#0e1218_60%,#06090e_80%,#15181b_97%)] text-white">
  <button aria-label="Start" class="ml-2 w-[50px]"><svg class="h-[38px] w-[38px]" viewBox="0 0 38 38"><circle cx="19" cy="19" r="18" fill="url(#gOrb)" stroke="#16324c"/><path d="M10 12c3-2 6-2 8-.5L16.500 18c-2-1.500-5-1.500-8 0z" fill="#e8632c"/><path d="M20 12c3 1.500 5 1.500 8.500 0L27 18.500c-3 1.500-6 1.500-8.500 0z" fill="#8fc63d"/><path d="M8 20c3-1.500 6-1.500 8 .2L14.300 27c-2-1.500-5-1.500-8 0z" fill="#49a3e0"/><path d="M18 20.500c3 1.500 5 1.500 8.500 0L25 27c-3 1.500-6 1.500-8.500 0z" fill="#fbcd36"/><path d="M4 13C8 2 30 2 34 13c-8 5-22 5-30 0z" fill="#fff" opacity=".25"/></svg></button>
  <button aria-label="Windows Explorer" class="flex w-[62px] justify-center"><svg class="h-[30px] w-8" viewBox="0 0 32 30"><path d="M2 2h11l2 3h14v9H2z" fill="#dcb64c"/><path d="M5 1h5v3H5z" fill="#3aa44a"/><path d="M13 4h13v4H13z" fill="#fff"/><path d="M15 4h4v2h-4z" fill="#cf3a2c"/><path d="M23 4h4v2h-4z" fill="#3a8ed0"/><path d="M0 8h32v20H0z" fill="#f8e3a0" stroke="#d9b457"/><path d="M5 30V20c0-3 22-3 22 0v10h-5v-6H10v6z" fill="#86c8f0" stroke="#4f9fd6"/></svg></button>
  <button aria-label="Firefox" class="flex w-[62px] justify-center"><svg class="h-8 w-8" viewBox="0 0 32 32"><circle cx="17" cy="14" r="13" fill="#2f68b8"/><path d="M12 4c4-3 10-2 13 2-5-1-6 2-3 4-5 2-9-1-10-6z" fill="#8cc6f2"/><path d="M2 6c0-2 1-3 2-4 1 3 3 4 6 4 2 0 4 1 5 3-1 2-4 2-4 5 2 6 10 7 14 2 3-4 2-8 0-11 9 7 8 26-9 26C2 31-2 17 2 6z" fill="#e8661b"/><path d="M5 20c4 8 16 9 22 1-1 6-6 9-11 9S6 27 5 20z" fill="#f8a426"/></svg></button>
  <button aria-label="Database tool" class="flex w-[62px] justify-center"><svg class="h-8 w-8" viewBox="0 0 32 32"><path d="M0 0h32v32H0z" fill="#fff"/><path d="M1.500 1.500h29v29h-29z" fill="none" stroke="#1d2547"/><path d="M12 9.500c4 0 6 1 7 3 4-1 6-2 8-4 2 10-3 18-13 19.500-7 .5-10-4-10-9.500 0-5 3-9 8-9z" fill="#1d2547"/><path d="M5 14h12M4 17h14M4 20h14M5 23h12" stroke="#fff"/><path d="M19 13c2 5 0 11-5 15 8-1 13-8 11-18-2 2-4 2.500-6 3z" fill="#fff" opacity=".25"/><path d="M17 4h9v4c0 3-4 4-9 3 3-1 3-4 0-7z" fill="#8b90a8"/></svg></button>
  <button aria-label="Document" class="flex h-[38px] w-[62px] justify-center px-[2px]"><span class="flex w-full items-center justify-center rounded-[2px] border border-[#9aa1a8] bg-[linear-gradient(135deg,#8d949a,#4c555d_50%,#5a636b)]"><svg class="h-[31px] w-[26px]"><use href="#doc"/></svg></span></button>
  <button aria-label="Skype" class="flex h-[38px] w-[62px] justify-center px-[2px]"><span class="flex w-full items-center justify-center rounded-[2px] border border-[#9aa1a8] bg-[linear-gradient(135deg,#a8aeb3,#6a737b_50%,#5a636b)]"><svg class="h-8 w-8" viewBox="0 0 32 32"><circle cx="11" cy="11" r="10" fill="#27aeea"/><circle cx="20" cy="19" r="10" fill="#27aeea"/><circle cx="15.500" cy="15" r="12" fill="#2fb4ee"/><path d="M20.500 9.500C18 7 10 7 10 11.500c0 5 11 2.500 11 7.500 0 4.500-8.500 5-11.500 1.500" fill="none" stroke="#fff" stroke-width="3.200" stroke-linecap="round"/><path d="M17 19c3-4 8-2 8 2 5 1 7 5 5 9-5 1-7-1-8-5-4 0-6-2-5-6z" fill="#f3fbe6" stroke="#7fc241"/></svg></span></button>
  <button aria-label="Document 2" class="flex w-[62px] justify-center"><svg class="h-[31px] w-[26px]"><use href="#doc"/></svg></button>
  <button aria-label="CCleaner" class="flex w-[62px] justify-center"><svg class="h-8 w-8" viewBox="0 0 32 32"><path d="M28 8C24-1 10-1 5 7s-3 19 6 23c7 3 15 0 18-6l-6-3c-3 5-12 3-12-5s7-11 11-5z" fill="#cf2b22" stroke="#7d120d"/><path d="M24 3l3 2-6 8-3-2z" fill="#3f88d8"/><path d="M14 11l10 6-3 4-10-6z" fill="#2f7ac8"/><path d="M11 14l10 7-5 6c-5 0-11-2-15-6 4 0 8-3 10-7z" fill="#efbe6b" stroke="#a8742a"/><path d="M6 22l6-5M11 25l5-5" stroke="#a8742a"/></svg></button>
  <button aria-label="Microsoft Project" class="flex h-[38px] w-[62px] justify-center px-[2px]"><span class="flex w-full items-center justify-center rounded-[2px] border border-white bg-[linear-gradient(135deg,#e4e6e8,#a9adb1_50%,#8c9196_51%,#bfc2c5)]"><svg class="h-[30px] w-[30px]" viewBox="0 0 30 30"><path d="M8 1h21v28H1V8z" fill="#f6fbef" stroke="#5ba52b" stroke-width="1.500"/><path d="M16 2h12v12H16z" fill="url(#gGreen)"/><text x="6" y="21" font-family="Open Sans" font-weight="700" font-size="21" fill="#3a8a1c">P</text><path d="M16 14l13 2-3 13-12-3z" fill="#fff" stroke="#7fb94f"/><path d="M18 18l4-1-1 4zM17 23l3-1 1 4-3-1zM23 22l3 1-1 4-2-1z" fill="#6db33c"/></svg></span></button>
  <div class="ml-auto flex items-center text-[12px]">
    <span class="pb-1 text-[11px]">EN</span>
    <svg class="ml-[17px] h-1 w-[7px]" viewBox="0 0 7 4"><path d="M0 4h7L3.500 0z" fill="#fff"/></svg>
    <svg class="ml-[14px] h-4 w-4" viewBox="0 0 16 16" role="img" aria-label="Action Center"><path d="M1.500 1v14" stroke="#fff" stroke-width="1.500"/><path d="M3 2h5l1 1h5v6H8L7 8H3z" fill="#fff"/><circle cx="11" cy="11" r="4.500" fill="#d3271e"/><path d="M9 9l4 4M13 9l-4 4" stroke="#fff" stroke-width="1.400"/></svg>
    <svg class="ml-2 h-4 w-4" viewBox="0 0 16 16" role="img" aria-label="Network"><path d="M5.500 3.500h9v8h-10V7M10 12v2M6 14.500h8" stroke="#fff" fill="none" stroke-width="1.300"/><path d="M1 1v3h4V1M3 4v4h2" stroke="#fff" fill="none" stroke-width="1.200"/></svg>
    <svg class="ml-2 h-4 w-4" viewBox="0 0 16 16" role="img" aria-label="Muted"><path d="M0 5h3l4-4v14l-4-4H0z" fill="#fff"/><circle cx="11" cy="11" r="4.500" fill="#d3271e"/><path d="M9 9l4 4M13 9l-4 4" stroke="#fff" stroke-width="1.400"/></svg>
    <div class="ml-[12px] w-[68px] text-center text-[11px] leading-[18px]"><div>10:50</div><div>04-Sep-13</div></div>
    <button aria-label="Show desktop" class="ml-[7px] h-[38px] w-[14px] border border-[#6b7178] bg-[linear-gradient(135deg,#6d7278,#14181c_45%)]"></button>
  </div>
</nav>

<script>
  // [id, level, kind, note, name, start day, end day, resource]; days count from Mon 24 Jun
  const tasks = [
    [36,1,'s',0,'LSB WP1 EMR Design Workshops',2,18],
    [37,2,'s',0,'Clinical Forms Workshops',2,9],
    [38,3,'s',0,'Clinical Forms Workshop 1',2,3],
    [39,4,'t',1,'Family History',2,3,'Lorenzo'],
    [40,4,'t',1,'Social History',2,3,'Lorenzo'],
    [41,4,'t',1,'Functional Status',2,3,'Lorenzo'],
    [42,3,'s',0,'Clinical Forms Workshop 2',3,4],
    [43,4,'t',1,'Immunisation',3,4,'Lorenzo'],
    [44,4,'t',1,'Allergies',3,4,'Lorenzo'],
    [45,4,'t',1,'Medication',3,4,'Lorenzo'],
    [46,4,'t',1,'Vital Signs',3,4,'Lorenzo'],
    [47,3,'s',0,'Clinical Forms Workshop 3',4,5],
    [48,4,'t',1,'Encounters',4,5,'Lorenzo'],
    [49,4,'t',1,'Procedures',4,5,'Lorenzo'],
    [50,4,'t',1,'Payers',4,5,'Lorenzo'],
    [51,3,'s',0,'Clinical Forms Workshop 4',7,9],
    [52,4,'t',1,'A review of all clinical forms for defining Minimum clinica',7,8,'Lorenzo'],
    [53,4,'t',1,'A review of all clinical forms for defining National classif',7,8,'Lorenzo'],
    [54,4,'t',0,'Form 100',7,8,'Lorenzo'],
    [55,4,'t',0,'A review of all clinical forms for defining Minimum clinical datasets and related CDA c',8,9,'Lorenzo'],
    [56,4,'t',0,'A review of all clinical forms for defining National classifiers and vocabulary',8,9,'Lorenzo'],
    [57,2,'s',0,'Clinical Application Workshops',9,11.5],
    [58,3,'t',1,'Lab Exams and Document Viewer',9,9.5,'Lorrenzo,Lorenzo'],
    [59,3,'t',1,'Schedule Manager',11,11.5,'Lorrenzo,Lorenzo'],
    [60,2,'s',0,'Integration Workshops   (Messaging Fabric)',9,12],
    [61,3,'t',1,'Classifier and Other MoLHSA Registers',9,10,'Vania'],
    [62,3,'t',1,'Security Part 1  (Authentication, Digital Sig and Authorisation)',10,11,'Vania and Lorrenzo'],
    [63,3,'t',1,'Security Part 2 (New Patient and Patient List)',10,11,'Vania and Lorrenzo'],
    [64,3,'t',1,'Hl7 Message to connect HIS',11,12,'Vania'],
    [65,2,'s',0,'Portal Workshop',14,18],
    [66,3,'t',1,'Central EMR for MoLHSA',14,15,'Lorrenzo'],
    [67,3,'t',1,'Central EMR for Hospital',15,16,'Lorrenzo'],
    [68,3,'t',1,'GP Portal',16,17,'Lorrenzo'],
    [69,3,'t',1,'Citizen Portal',17,18,'Lorrenzo'],
    [70,1,'c',0,'LSB WP 2 -  Hospital Software Installation']
  ];
  const DAY = 40;

  document.getElementById('tasks').innerHTML = tasks.map(([id, lvl, kind, note, name]) => {
    const sel = id === 36, red = lvl === 1;
    const toggle = kind === 't' ? '' : `<button class="mr-1 flex h-[9px] w-[9px] shrink-0 items-center justify-center border border-[#b9c3cf] bg-white" aria-label="Toggle"><svg class="h-[5px] w-[5px]" viewBox="0 0 5 5"><path d="${kind === 'c' ? 'M0 2h5v1H0zM2 0h1v5H2z' : 'M0 2h5v1H0z'}"/></svg></button>`;
    const pad = 16 + 16 * lvl - (kind === 't' ? 0 : 13) - (sel ? 1 : 0);
    return `<tr class="h-[19px] align-top">
      <td class="${sel ? 'bg-[#a3a3a3]' : 'bg-[#dfe2e8]'} h-[19px] border-r border-b border-[#a8abb2] p-0 text-center leading-[17px] text-[#3b3b3b]">${id}</td>
      <td class="${sel ? 'bg-black fill-[#ffff99]' : 'bg-white fill-[#000080]'} border-r border-b border-[#bcbcbc] p-0"><span class="flex h-[17px] items-center gap-[3px] pt-px pl-[3px]">${kind === 'c' ? '' : '<svg class="h-[13px] w-[15px]"><use href="#check"/></svg>'}${note ? '<svg class="h-[14px] w-[15px]"><use href="#note"/></svg>' : ''}</span></td>
      <td class="${sel ? 'border border-b-2 border-black leading-[15px]' : 'border-r border-b border-[#bcbcbc] leading-[17px]'} overflow-hidden p-0"><div class="${kind === 't' ? '' : 'font-bold'} ${red ? 'text-[#d8141c]' : ''} flex items-center overflow-hidden whitespace-pre" style="padding-left:${pad}px">${toggle}<span>${name}</span></div></td>
      <td class="${sel ? 'bg-black' : ''} border-b border-[#bcbcbc] p-0"></td></tr>`;
  }).join('');

  const wd = ['Mon','Tue','Wed','Thu','Fri','Sat','Sun'];
  let major = '', minor = '', grid = '';
  for (let d = 0; d < 26; d++) {
    const date = d < 7 ? 24 + d : d - 6;
    if (d % 2 === 0) major += `<div class="w-20 border-l border-[#777b82] whitespace-nowrap">${wd[d % 7]} ${String(date).padStart(2, '0')} ${d < 7 ? 'Jun' : 'Jul'}</div>`;
    minor += '<div class="w-10 border-l border-[#777b82] pr-1 text-center">0</div>';
    grid += `<div class="${d % 7 > 4 ? 'bg-[#edf0f6]' : ''} ${d % 2 === 0 ? 'border-l border-dotted border-[#777]' : ''} w-10"></div>`;
  }
  document.getElementById('major').innerHTML = major;
  document.getElementById('minor').innerHTML = minor;
  document.getElementById('grid').innerHTML = grid;

  document.getElementById('bars').innerHTML = tasks.map(([id, , kind, , , a, b, who]) => {
    if (kind === 'c') return '';
    const w = (b - a) * DAY;
    if (kind === 's') {
      const m = x => `<path d="M${x + .5} .5h10v5l-5 4.500-5-4.500z" fill="url(#gSum)" stroke="#000"/>`;
      return `<div class="h-[19px] pt-1"><svg class="h-[11px]" style="width:${w + 11}px;margin-left:${a * DAY - 7}px"><rect x="5.500" y=".5" width="${w}" height="5" fill="#555" stroke="#000"/>${m(0)}${m(w)}</svg></div>`;
    }
    return `<div class="flex h-[19px] items-start whitespace-nowrap"><svg class="mt-1 h-[11px] shrink-0" style="width:${w}px;margin-left:${a * DAY - 1}px"><rect x=".5" y=".5" width="${w - 1}" height="10" rx="1.500" fill="url(#gTask)" stroke="#0a0aa8"/><rect x="0" y="3" width="${w}" height="4" fill="#a01038"/><rect x="1" y="4" width="${w - 2}" height="2" fill="#f46c74"/></svg><span class="ml-[7px] leading-[16px]">${who}</span></div>`;
  }).join('');
</script>
</body>
</html>
